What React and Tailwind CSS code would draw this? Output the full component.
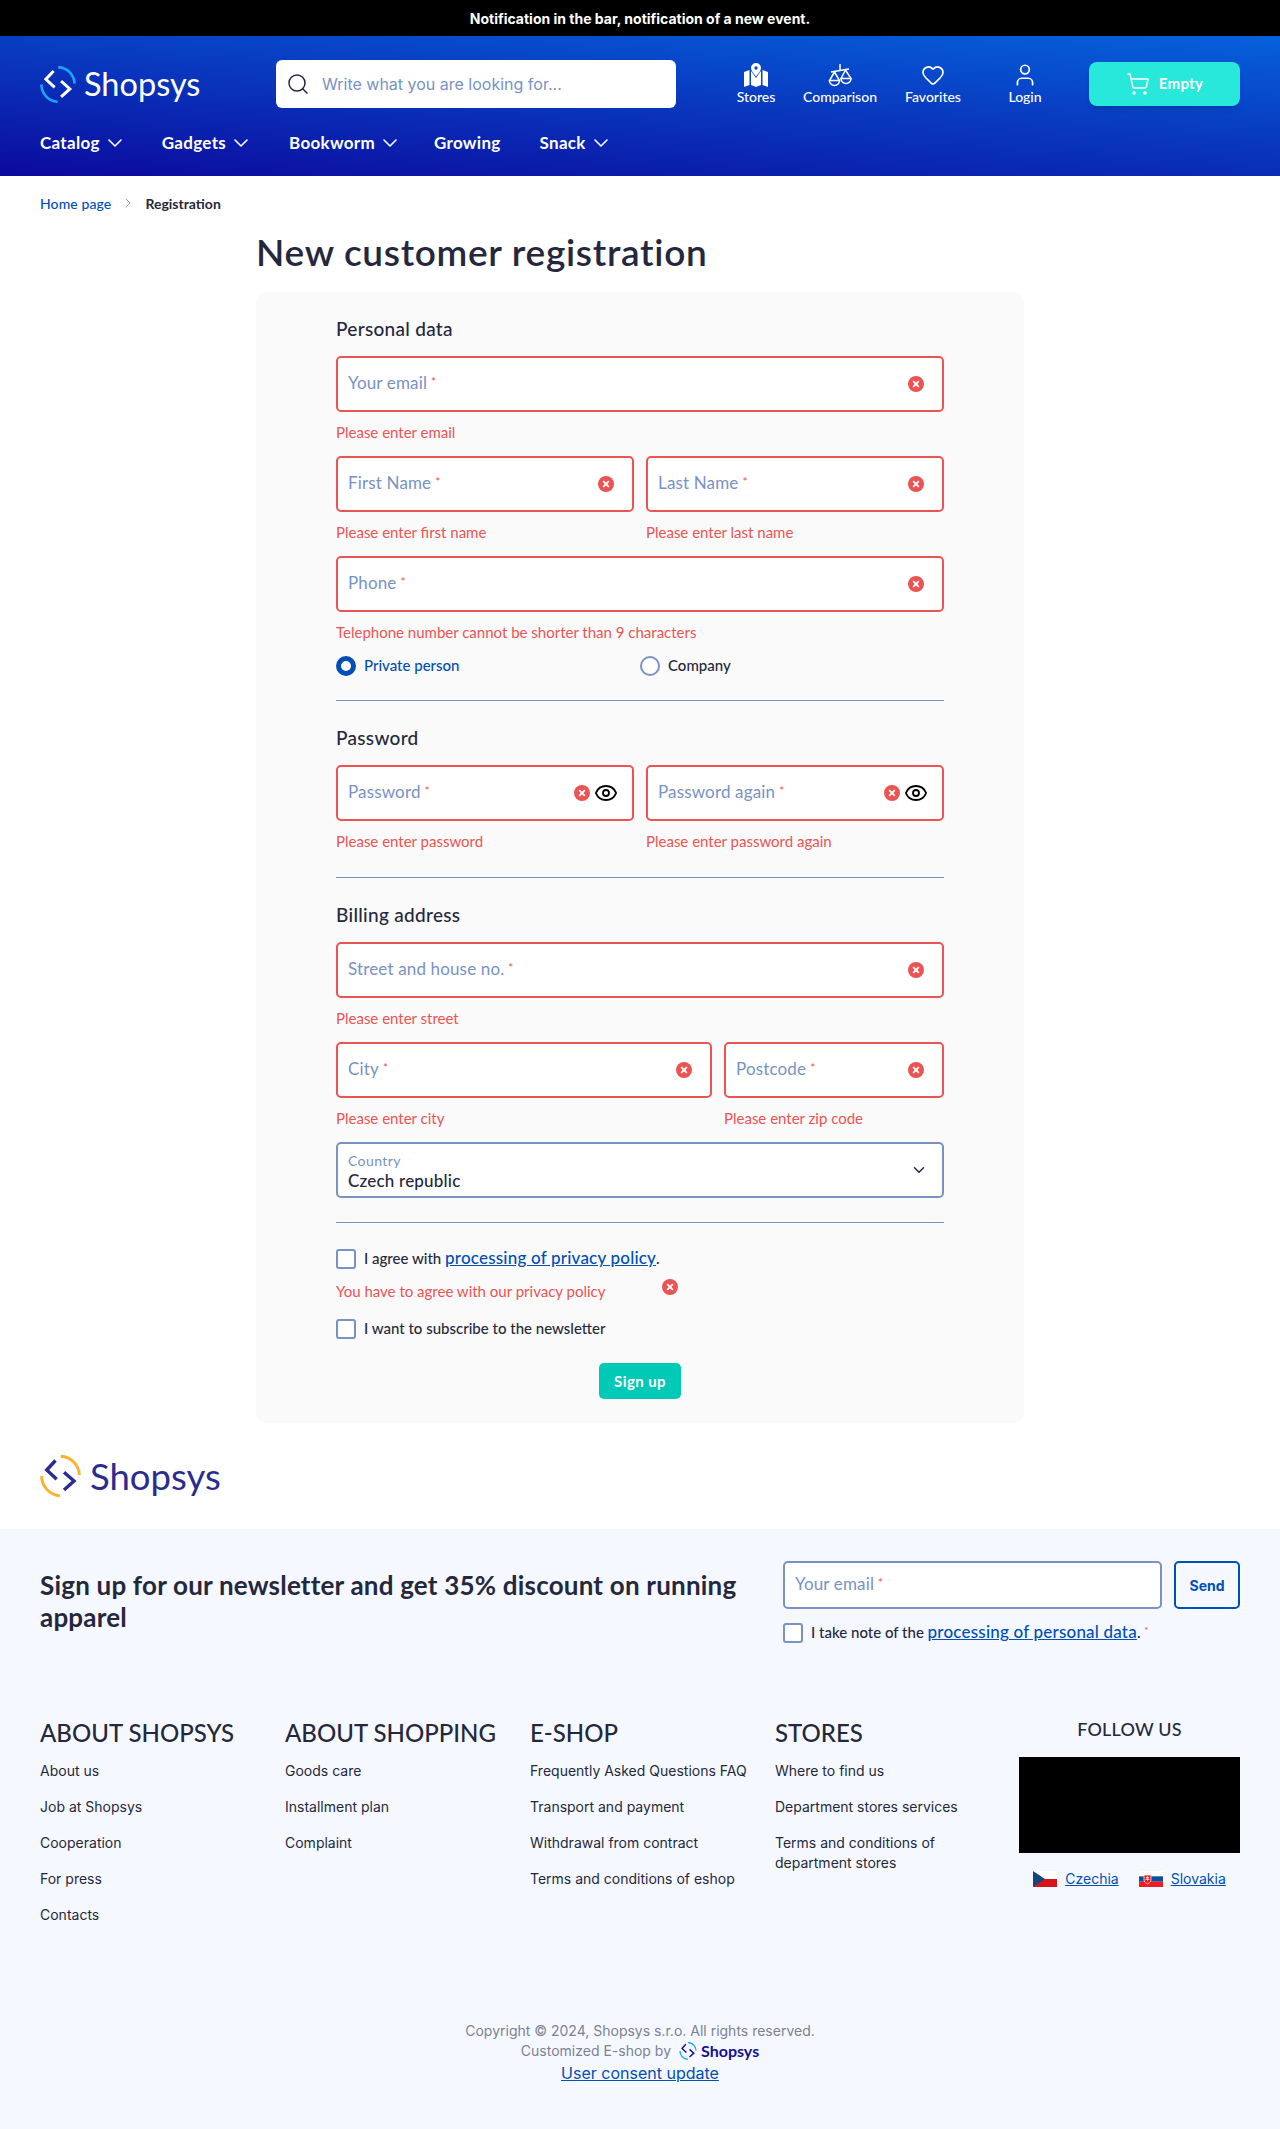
import React from "react";
import { Search, ChevronDown, ChevronRight, Heart, User, ShoppingCart, Eye } from "lucide-react";

const rw = "font-['Lato',sans-serif]";

function LogoMark({ arc, chev, className }) {
  return (
    <svg viewBox="0 0 41 42" className={className} fill="none">
      <path d="M20.7 1.2A19.5 19.5 0 0 1 39.3 20" stroke={arc} strokeWidth="3" />
      <path d="M1.7 21A19.5 19.5 0 0 0 20 40.7" stroke={arc} strokeWidth="3" />
      <path d="M15.5 5.5L6.7 15l10 9.3" stroke={chev} strokeWidth="3.4" />
      <path d="M24 17.2L34 26l-10 9" stroke={chev} strokeWidth="3.4" />
    </svg>
  );
}

function ErrIcon({ className = "" }) {
  return (
    <svg viewBox="0 0 16 16" className={`w-4 h-4 shrink-0 ${className}`}>
      <circle cx="8" cy="8" r="8" fill="#ec5353" />
      <path d="M5.2 5.2l5.6 5.6M10.8 5.2l-5.6 5.6" stroke="#fff" strokeWidth="1.8" />
    </svg>
  );
}

function Placeholder({ children }) {
  return (
    <span className={`${rw} text-[17px] text-[#7892c4] tracking-[0.15px] leading-5`}>
      {children}
      <span className="text-[#ec5353] text-[12px] align-[3px] ml-1">*</span>
    </span>
  );
}

function Field({ label, error, eye, className = "" }) {
  return (
    <div className={`min-w-0 ${className}`}>
      <div className="h-14 border-2 border-[#ec5353] rounded-[5px] bg-white flex items-center pl-[10px] pr-[18px]">
        <div className="flex-1 -mt-[3px]"><Placeholder>{label}</Placeholder></div>
        <ErrIcon className={eye ? "mr-1" : ""} />
        {eye && <Eye className="w-6 h-6 text-black -mr-1" strokeWidth={1.8} />}
      </div>
      <div className={`${rw} pt-[11px] pb-[15px] text-[15px] leading-[18px] text-[#ec5353]`}>{error}</div>
    </div>
  );
}

function Heading({ children, className = "" }) {
  return <h2 className={`${rw} text-[19px] leading-6 font-medium text-[#25283d] tracking-[0.3px] mb-[15px] ${className}`}>{children}</h2>;
}

function Checkbox() {
  return <span className="w-5 h-5 block shrink-0 border-2 border-[#7892c4] rounded-[3px] bg-white" />;
}

function HeaderLink({ icon, label, className = "" }) {
  return (
    <div className={`w-20 flex flex-col items-center text-white ${className}`}>
      <div className="h-6 flex items-center justify-center -mt-[1px]">{icon}</div>
      <span className={`${rw} text-[14px] leading-4 font-medium mt-[2px]`}>{label}</span>
    </div>
  );
}

function NavItem({ label, chev = true, className = "" }) {
  return (
    <div className={`flex items-center text-white ${className}`}>
      <span className={`${rw} text-[17px] font-bold tracking-[0.3px]`}>{label}</span>
      {chev && <ChevronDown className="w-6 h-6 ml-[3px]" strokeWidth={1.6} />}
    </div>
  );
}

function FooterCol({ title, links }) {
  return (
    <div className="w-[245px]">
      <h3 className={`${rw} text-[24px] leading-8 font-medium text-[#25283d]`}>{title}</h3>
      <ul className="mt-3 flex flex-col gap-4 w-[220px]">
        {links.map((l) => (
          <li key={l} className="text-[14px] leading-5 text-[#25283d]">{l}</li>
        ))}
      </ul>
    </div>
  );
}

export default function App() {
  return (
    <div className="font-['Inter',sans-serif] bg-white text-[#25283d] w-full">
      <div className="h-9 bg-black flex items-center justify-center text-white text-[14px] font-bold">
        Notification in the bar, notification of a new event.
      </div>

      <header className="h-[140px] bg-[linear-gradient(184deg,#0661dc,#0c0a9e)] pt-6">
        <div className="flex px-10 h-12 items-center">
          <div className="w-[236px] flex items-center">
            <LogoMark arc="#1aa5ff" chev="#fff" className="w-9 h-[37px]" />
            <span className={`${rw} text-white text-[32.5px] ml-2 leading-none`}>Shopsys</span>
          </div>
          <div className="w-[400px] h-12 bg-white rounded-[6px] flex items-center pl-[10px]">
            <Search className="w-6 h-6 text-[#25283d]" strokeWidth={1.5} />
            <span className="ml-3 text-[16px] text-[#7892c4]">Write what you are looking for...</span>
          </div>
          <HeaderLink className="ml-10" label="Stores" icon={
            <svg viewBox="0 0 24 24" className="w-6 h-6" fill="#fff">
              <path d="M0 9l5.500-2v15L0 24z" />
              <path d="M18.500 7L24 9v15l-5.500-2z" />
              <path d="M7 8l5 7 5-7v14l-5 2-5-2z" />
              <path fillRule="evenodd" d="M12 0a5 5 0 0 1 5 5c0 3-3 6-5 8.500C10 11 7 8 7 5a5 5 0 0 1 5-5zm0 3.300a1.700 1.700 0 1 0 0 3.400 1.700 1.700 0 0 0 0-3.400z" />
            </svg>
          } />
          <HeaderLink className="ml-1" label="Comparison" icon={
            <svg viewBox="0 0 24 24" className="w-6 h-6" fill="none" stroke="#fff" strokeWidth="1.500">
              <path d="M12 1v7M3 9l18-3" />
              <path d="M6.500 9L1.500 17.500h10zM1.500 17.500a5 5 0 0 0 10 0" />
              <path d="M17.500 7l-4.500 8.500h10zM13 15.500a4.800 4.800 0 0 0 10 0" />
            </svg>
          } />
          <HeaderLink className="ml-[13px]" label="Favorites" icon={<Heart className="w-6 h-6" strokeWidth={1.7} />} />
          <HeaderLink className="ml-3" label="Login" icon={<User className="w-[26px] h-[26px]" strokeWidth={1.6} />} />
          <div className="ml-6 w-[151px] h-11 rounded-[8px] bg-[#28e8dc] flex items-center justify-center text-white shadow-md">
            <ShoppingCart className="w-6 h-6 mr-[9px]" strokeWidth={1.5} />
            <span className={`${rw} text-[15px] font-bold tracking-[0.3px] -mt-[2px]`}>Empty</span>
          </div>
        </div>
        <nav className="flex px-10 h-10 mt-[15px] items-center">
          <NavItem label="Catalog" />
          <NavItem label="Gadgets" className="ml-[35px]" />
          <NavItem label="Bookworm" className="ml-9" />
          <NavItem label="Growing" chev={false} className="ml-8" />
          <NavItem label="Snack" className="ml-[39px]" />
        </nav>
      </header>

      <main>
        <div className={`${rw} h-[54px] px-10 flex items-center text-[14px] font-medium`}>
          <span className="text-[#004eb6] tracking-[0.1px]">Home page</span>
          <ChevronRight className="w-4 h-4 mx-[9px] text-[#7892c4]" strokeWidth={1.3} />
          <span className="font-bold text-[#25283d]">Registration</span>
        </div>
        <h1 className={`${rw} ml-[256px] text-[37px] leading-[44px] font-semibold tracking-[0.7px] text-[#25283d] mb-[18px]`}>New customer registration</h1>

        <form className="relative ml-[256px] w-[768px] bg-[#fafafa] rounded-[10px] pt-[25px] pb-6 px-20">
          <Heading>Personal data</Heading>
          <Field label="Your email" error="Please enter email" />
          <div className="flex gap-3">
            <Field className="flex-1" label="First Name" error="Please enter first name" />
            <Field className="flex-1" label="Last Name" error="Please enter last name" />
          </div>
          <Field label="Phone" error="Telephone number cannot be shorter than 9 characters" />
          <div className={`${rw} flex h-5 items-center text-[15px] font-medium`}>
            <div className="w-[304px] flex items-center">
              <span className="w-5 h-5 rounded-full border-[5px] border-[#004eb6] bg-white" />
              <span className="ml-2 text-[#004eb6] -mt-[2px]">Private person</span>
            </div>
            <span className="w-5 h-5 rounded-full border-2 border-[#7892c4] bg-white" />
            <span className="ml-2 -mt-[2px]">Company</span>
          </div>
          <div className="mt-6 h-px bg-[#7892c4]" />

          <Heading className="mt-[25px]">Password</Heading>
          <div className="flex gap-3">
            <Field className="flex-1" eye label="Password" error="Please enter password" />
            <Field className="flex-1" eye label="Password again" error="Please enter password again" />
          </div>
          <div className="mt-3 h-px bg-[#7892c4]" />

          <Heading className="mt-[25px]">Billing address</Heading>
          <Field label="Street and house no." error="Please enter street" />
          <div className="flex gap-3">
            <Field className="w-[376px]" label="City" error="Please enter city" />
            <Field className="flex-1" label="Postcode" error="Please enter zip code" />
          </div>
          <div className="h-14 border-2 border-[#7892c4] rounded-[5px] bg-white pl-[10px] pr-[14px] flex items-center">
            <div className="flex-1 flex flex-col pt-[3px]">
              <span className={`${rw} text-[14px] leading-4 text-[#7892c4] tracking-[0.4px]`}>Country</span>
              <span className={`${rw} text-[17px] leading-5 mt-[2px] font-medium text-[#25283d] tracking-[0.2px]`}>Czech republic</span>
            </div>
            <ChevronDown className="w-[18px] h-[18px] text-[#25283d]" strokeWidth={2} />
          </div>
          <div className="mt-6 h-px bg-[#7892c4]" />

          <div className={`${rw} mt-[26px] flex items-center h-5 text-[15px] font-medium`}>
            <Checkbox />
            <span className="ml-2 -mt-[2px]">I agree with <a className="text-[#004eb6] underline text-[17px] tracking-[0.2px]">processing of privacy policy</a>.</span>
          </div>
          <div className={`${rw} mt-[13px] text-[15px] leading-[18px] text-[#ec5353]`}>You have to agree with our privacy policy</div>
          <ErrIcon className="absolute left-[406px] top-[987px]" />
          <div className={`${rw} mt-[19px] flex items-center h-5 text-[15px] font-medium`}>
            <Checkbox />
            <span className="ml-2 -mt-[2px]">I want to subscribe to the newsletter</span>
          </div>
          <div className="mt-6 flex justify-center">
            <button type="button" className={`${rw} w-[82px] h-9 rounded-[5px] bg-[#00c9b5] text-white text-[15px] font-bold tracking-[0.4px]`}>Sign up</button>
          </div>
        </form>

        <div className="pt-8 pb-8 pl-10 flex items-center h-[106px]">
          <LogoMark arc="#f9b233" chev="#2a2d8f" className="w-[41px] h-[42px]" />
          <span className={`${rw} text-[#2a2d8f] text-[36.5px] ml-[9px] leading-none`}>Shopsys</span>
        </div>
      </main>

      <footer className="bg-[#f5f9ff] pt-8 pb-11">
        <div className="flex px-10 justify-between">
          <h2 className={`${rw} w-[720px] mt-2 text-[26px] leading-8 font-bold tracking-[0.2px] text-[#25283d]`}>
            Sign up for our newsletter and get 35% discount on running apparel
          </h2>
          <div className="w-[457px]">
            <div className="flex gap-3">
              <div className="flex-1 h-12 border-2 border-[#7892c4] rounded-[5px] bg-white flex items-center pl-[10px] pb-[3px]">
                <Placeholder>Your email</Placeholder>
              </div>
              <div className="w-[66px] h-12 border-2 border-[#004eb6] rounded-[5px] flex items-center justify-center text-[14px] font-bold text-[#004eb6]">Send</div>
            </div>
            <div className={`${rw} mt-[14px] flex items-center h-5 text-[15px] font-medium`}>
              <Checkbox />
              <span className="ml-2 -mt-[2px]">I take note of the <a className="text-[#004eb6] underline text-[17px] tracking-[0.2px]">processing of personal data</a>. <span className="text-[#ec5353] text-[10px] align-[4px]">*</span></span>
            </div>
          </div>
        </div>

        <div className="flex pl-10 pr-10 mt-[74px]">
          <FooterCol title="ABOUT SHOPSYS" links={["About us", "Job at Shopsys", "Cooperation", "For press", "Contacts"]} />
          <FooterCol title="ABOUT SHOPPING" links={["Goods care", "Installment plan", "Complaint"]} />
          <FooterCol title="E-SHOP" links={["Frequently Asked Questions FAQ", "Transport and payment", "Withdrawal from contract", "Terms and conditions of eshop"]} />
          <FooterCol title="STORES" links={["Where to find us", "Department stores services", "Terms and conditions of department stores"]} />
          <div className="w-[221px] -ml-[1px]">
            <div className={`${rw} text-[18px] leading-6 font-medium text-center tracking-[0.2px]`}>FOLLOW US</div>
            <div className="mt-4 h-24 bg-black" />
            <div className="mt-[18px] flex items-center justify-center text-[14px] leading-4 text-[#004eb6]">
              <svg viewBox="0 0 24 16" className="w-6 h-4">
                <rect width="24" height="8" fill="#fff" />
                <rect y="8" width="24" height="8" fill="#d7141a" />
                <path d="M0 0l12 8-12 8z" fill="#11457e" />
              </svg>
              <a className="underline ml-2">Czechia</a>
              <svg viewBox="0 0 24 16" className="w-6 h-4 ml-5">
                <rect width="24" height="5.330" fill="#fff" />
                <rect y="5.330" width="24" height="5.340" fill="#0b4ea2" />
                <rect y="10.670" width="24" height="5.330" fill="#ee1c25" />
                <path d="M5 4h7v5c0 2-2 3-3.500 4C7 12 5 11 5 9z" fill="#ee1c25" stroke="#fff" strokeWidth="0.700" />
                <path d="M8.500 5v5M7 6.500h3M6.500 8.300h4" stroke="#fff" strokeWidth="0.800" />
              </svg>
              <a className="underline ml-2">Slovakia</a>
            </div>
          </div>
        </div>

        <div className="mt-24 flex flex-col items-center text-[14px] leading-5 text-[#7d8194]">
          <div>Copyright © 2024, Shopsys s.r.o. All rights reserved.</div>
          <div className="flex items-center">
            Customized E-shop by
            <LogoMark arc="#1aa5ff" chev="#16118e" className="w-[18px] h-[18px] ml-2" />
            <span className={`${rw} ml-1 text-[16px] font-bold text-[#16118e]`}>Shopsys</span>
          </div>
          <a className="text-[16px] leading-6 text-[#004eb6] underline">User consent update</a>
        </div>
      </footer>
    </div>
  );
}
